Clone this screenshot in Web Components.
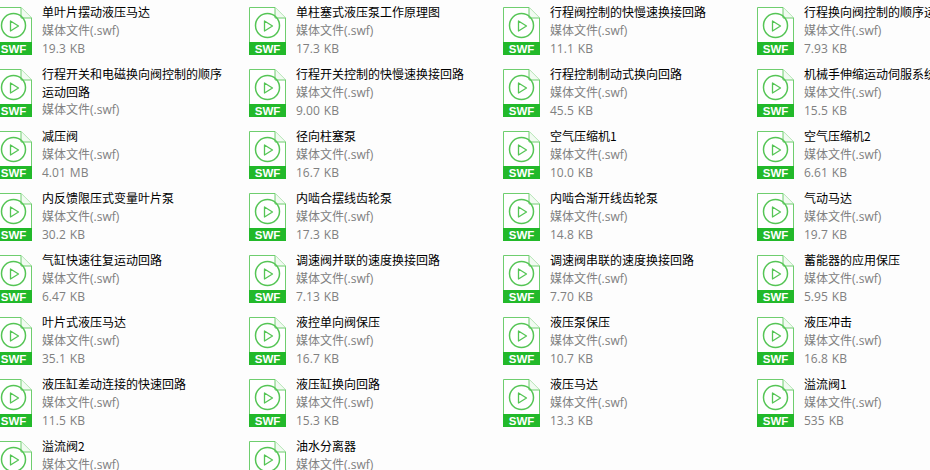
<!DOCTYPE html>
<html lang="zh"><head><meta charset="utf-8"><style>
html,body{margin:0;height:470px;overflow:hidden;background:#fdfdfd}
</style></head><body>
<file-list id="l"></file-list>
<script>
const icon=`<svg width="37" height="48" viewBox="0 0 37 48"><path d="M.5.5H26L36.5 11V47.5H.5Z" fill="#fff" stroke="#6fce6f"/><path d="M26 .5V11H36.5" fill="#f2fbf2" stroke="#6fce6f"/><circle cx="18.500" cy="18.500" r="12" fill="none" stroke="#55c555" stroke-width="1.500"/><path d="M15.500 14 23.500 19 15.500 24Z" fill="none" stroke="#55c555" stroke-width="1.300" stroke-linejoin="round"/><rect y="35" width="37" height="13" fill="#22b92a"/><text x="18.500" y="45.500" text-anchor="middle" font-family="'Liberation Sans',sans-serif" font-size="11.500" font-weight="700" fill="#fff">SWF</text></svg>`;
class FileItem extends HTMLElement{
  constructor(){super();const s=this.attachShadow({mode:'open'});
  s.innerHTML=`<style>
  :host{display:flex;gap:10px;height:62px;align-items:flex-start;font:12px/18px "Open Sans","Noto Sans CJK SC",sans-serif}
  .i{flex:none;height:48px;margin-top:7px}svg{display:block}
  .t{width:186px;flex:none;margin-top:3px}
  .n{color:#000;line-height:17.5px;box-sizing:border-box;padding-bottom:1px;min-height:19px;font-family:"Noto Sans CJK SC",sans-serif}.m{color:#808080;word-spacing:1px}
  </style><div class="i">${icon}</div><div class="t"><div class="n"></div><div class="m"></div><div class="m z"></div></div>`;}
  connectedCallback(){const r=this.shadowRoot.querySelectorAll('.n,.m');r[0].textContent=this.getAttribute('name');r[1].textContent='媒体文件(.swf)';const z=this.getAttribute('size');if(z)r[2].textContent=z;else r[2].remove();}
}
class FileList extends HTMLElement{
  constructor(){super();this.attachShadow({mode:'open'}).innerHTML=`<style>:host{display:grid;grid-template-columns:repeat(4,254px);grid-auto-rows:62px;margin-left:-5px;width:1016px}</style><slot></slot>`;}
}
customElements.define('file-item',FileItem);customElements.define('file-list',FileList);
const d=`单叶片摆动液压马达|19.3 KB
单柱塞式液压泵工作原理图|17.3 KB
行程阀控制的快慢速换接回路|11.1 KB
行程换向阀控制的顺序运动回路|7.93 KB
行程开关和电磁换向阀控制的顺序运动回路|
行程开关控制的快慢速换接回路|9.00 KB
行程控制制动式换向回路|45.5 KB
机械手伸缩运动伺服系统|15.5 KB
减压阀|4.01 MB
径向柱塞泵|16.7 KB
空气压缩机1|10.0 KB
空气压缩机2|6.61 KB
内反馈限压式变量叶片泵|30.2 KB
内啮合摆线齿轮泵|17.3 KB
内啮合渐开线齿轮泵|14.8 KB
气动马达|19.7 KB
气缸快速往复运动回路|6.47 KB
调速阀并联的速度换接回路|7.13 KB
调速阀串联的速度换接回路|7.70 KB
蓄能器的应用保压|5.95 KB
叶片式液压马达|35.1 KB
液控单向阀保压|16.7 KB
液压泵保压|10.7 KB
液压冲击|16.8 KB
液压缸差动连接的快速回路|11.5 KB
液压缸换向回路|15.3 KB
液压马达|13.3 KB
溢流阀1|535 KB
溢流阀2|
油水分离器|`.split('\n');
const l=document.getElementById('l');
for(const x of d){const [n,z]=x.split('|');const e=document.createElement('file-item');e.setAttribute('name',n);e.setAttribute('size',z);l.append(e);}
</script></body></html>
